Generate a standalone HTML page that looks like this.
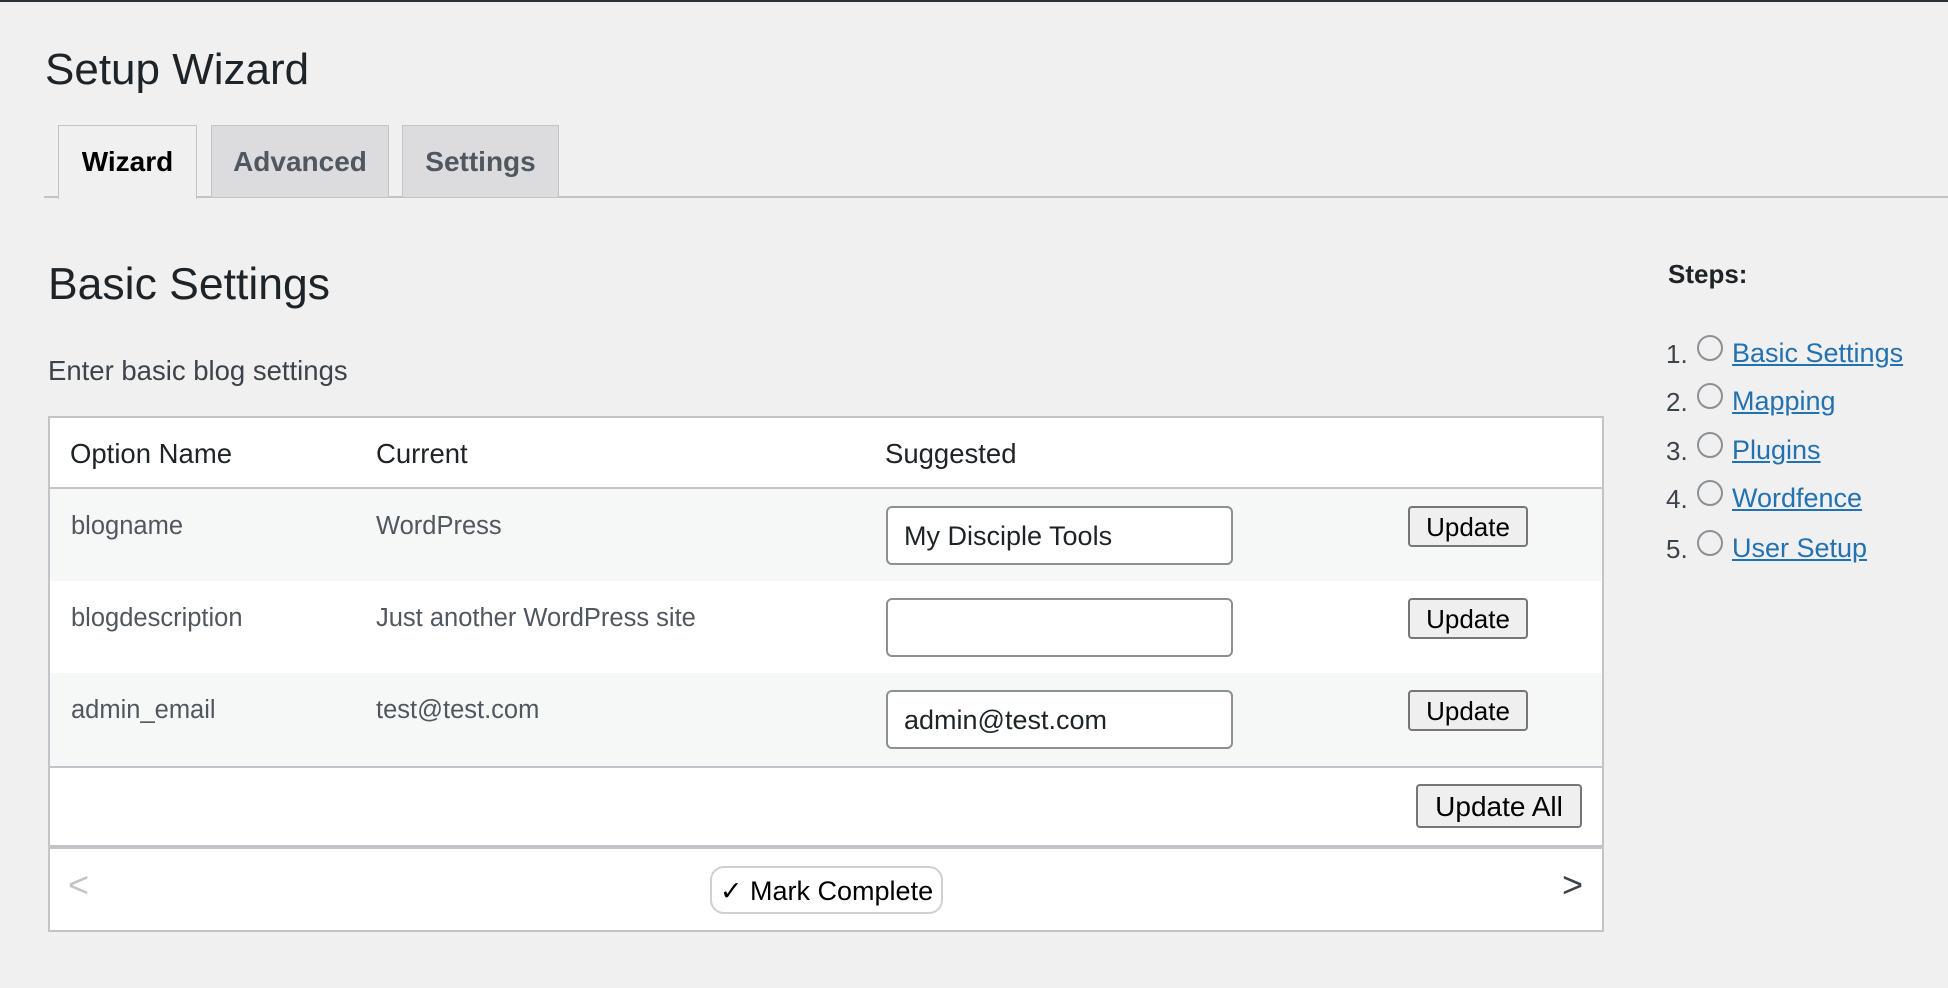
<!DOCTYPE html>
<html><head><meta charset="utf-8"><style>
*{box-sizing:border-box;margin:0;padding:0}
body{width:1948px;height:988px;background:#f0f0f1;font-family:"Liberation Sans",sans-serif;position:relative;overflow:hidden;color:#1d2327}
.a{position:absolute;white-space:nowrap}
.tab{position:absolute;top:125px;height:72px;border:1px solid #c3c4c7;border-bottom:none;background:#dcdcde;color:#50575e;font-weight:bold;font-size:28px;text-align:center;line-height:72px}
.btn{position:absolute;background:#efefef;border:2px solid #767676;border-radius:4px;color:#000;font-size:26px;text-align:center}
.inp{position:absolute;left:886px;width:347px;height:59px;background:#fff;border:2px solid #8c8f94;border-radius:6px;font-size:27px;line-height:57px;padding-left:16px;color:#1d2327}
.cell{position:absolute;font-size:25.5px;color:#50575e}
.num{position:absolute;left:1666px;font-size:26px;color:#3c434a}
.rad{position:absolute;left:1697px;width:26px;height:26px;border:2px solid #8c8f94;border-radius:50%}
.lnk{position:absolute;left:1732px;font-size:27px;color:#2271b1;text-decoration:underline}
</style></head><body>
<div class="a" style="left:0;top:0;width:1948px;height:2px;background:#2c3338"></div>
<div class="a" style="left:45px;top:45px;font-size:44px;color:#1d2327">Setup Wizard</div>
<div class="a" style="left:44px;top:196px;width:1904px;height:2px;background:#c3c4c7"></div>
<div class="tab" style="left:58px;width:139px;background:#f0f0f1;color:#000;height:74px">Wizard</div>
<div class="tab" style="left:211px;width:178px">Advanced</div>
<div class="tab" style="left:402px;width:157px">Settings</div>
<div class="a" style="left:48px;top:260px;font-size:44.5px">Basic Settings</div>
<div class="a" style="left:48px;top:355px;font-size:27.5px;color:#3c434a">Enter basic blog settings</div>

<div class="a" style="left:48px;top:416px;width:1556px;height:431px;background:#fff;border:2px solid #c3c4c7"></div>
<div class="a" style="left:50px;top:487px;width:1552px;height:2px;background:#c3c4c7"></div>
<div class="a" style="left:50px;top:489px;width:1552px;height:92px;background:#f6f7f7"></div>
<div class="a" style="left:50px;top:673px;width:1552px;height:93px;background:#f6f7f7"></div>
<div class="a" style="left:50px;top:766px;width:1552px;height:2px;background:#c3c4c7"></div>
<div class="a" style="left:70px;top:438px;font-size:27.5px;color:#1d2327">Option Name</div>
<div class="a" style="left:376px;top:438px;font-size:27.5px;color:#1d2327">Current</div>
<div class="a" style="left:885px;top:438px;font-size:27.5px;color:#1d2327">Suggested</div>

<div class="cell" style="left:71px;top:512px">blogname</div>
<div class="cell" style="left:376px;top:512px">WordPress</div>
<div class="inp" style="top:506px">My Disciple Tools</div>
<div class="btn" style="left:1408px;top:506px;width:120px;height:41px;line-height:39px">Update</div>

<div class="cell" style="left:71px;top:604px">blogdescription</div>
<div class="cell" style="left:376px;top:604px">Just another WordPress site</div>
<div class="inp" style="top:598px"></div>
<div class="btn" style="left:1408px;top:598px;width:120px;height:41px;line-height:39px">Update</div>

<div class="cell" style="left:71px;top:696px">admin_email</div>
<div class="cell" style="left:376px;top:696px">test@test.com</div>
<div class="inp" style="top:690px">admin@test.com</div>
<div class="btn" style="left:1408px;top:690px;width:120px;height:41px;line-height:39px">Update</div>

<div class="btn" style="left:1416px;top:784px;width:166px;height:44px;line-height:42px;font-size:28px">Update All</div>

<div class="a" style="left:48px;top:845px;width:1556px;height:87px;background:#fff;border:2px solid #c3c4c7;border-top:4px solid #c3c4c7"></div>
<div class="a" style="left:68px;top:864px;font-size:36px;color:#c3c4c7">&lt;</div>
<div class="a" style="left:1562px;top:864px;font-size:36px;color:#3c434a">&gt;</div>
<div class="a" style="left:710px;top:866px;width:233px;height:48px;border:2px solid #d0d0d0;border-radius:14px;background:#fff;font-size:27px;line-height:46px;text-align:center;color:#000">✓ Mark Complete</div>

<div class="a" style="left:1668px;top:259px;font-size:26px;font-weight:bold;color:#1d2327">Steps:</div>
<div class="num" style="top:339px">1.</div><div class="rad" style="top:335px"></div><div class="lnk" style="top:338px">Basic Settings</div>
<div class="num" style="top:387px">2.</div><div class="rad" style="top:383px"></div><div class="lnk" style="top:386px">Mapping</div>
<div class="num" style="top:436px">3.</div><div class="rad" style="top:432px"></div><div class="lnk" style="top:435px">Plugins</div>
<div class="num" style="top:484px">4.</div><div class="rad" style="top:480px"></div><div class="lnk" style="top:483px">Wordfence</div>
<div class="num" style="top:534px">5.</div><div class="rad" style="top:530px"></div><div class="lnk" style="top:533px">User Setup</div>
</body></html>
